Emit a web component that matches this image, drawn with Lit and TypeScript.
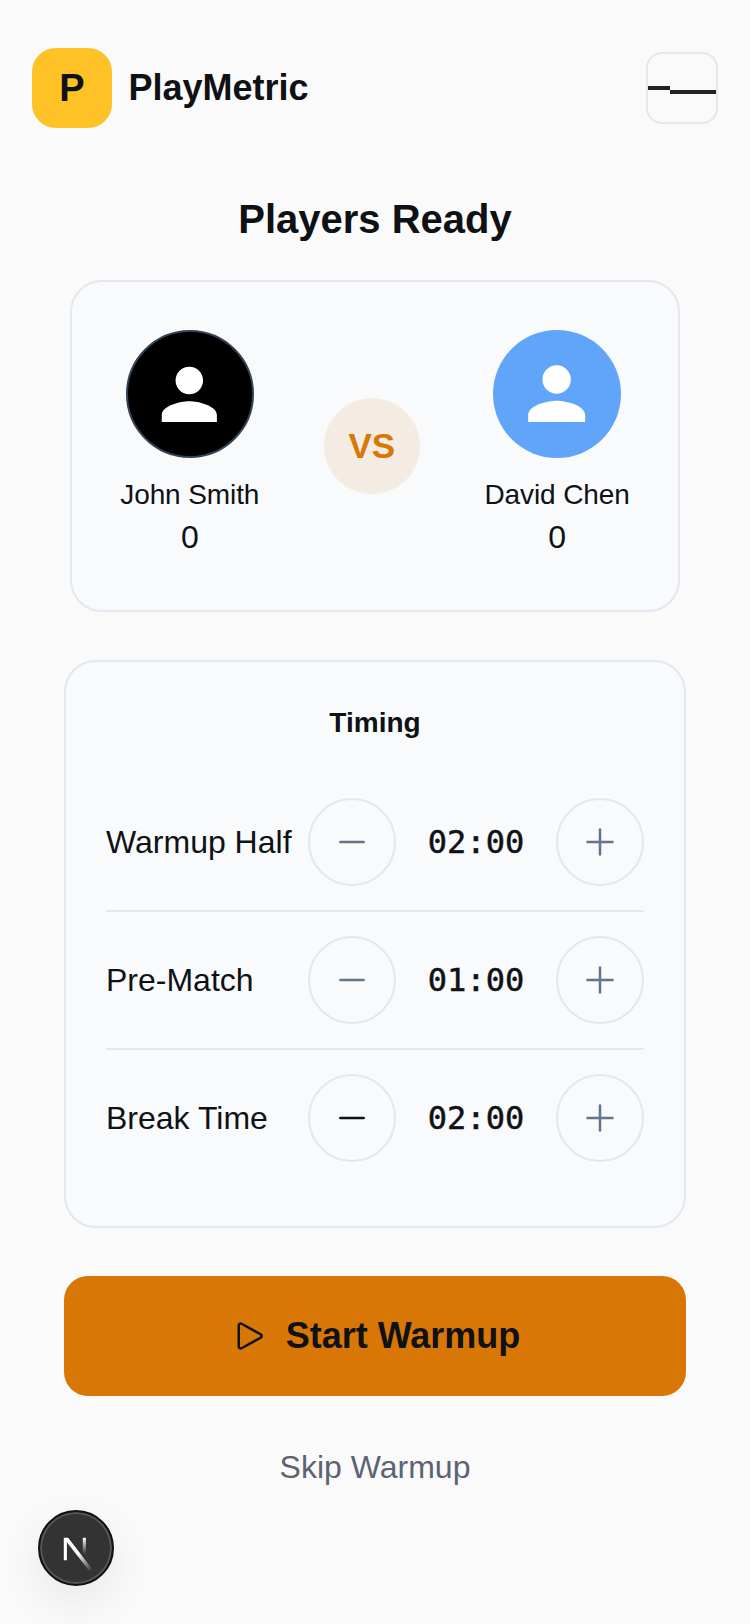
import { LitElement, html, css, svg } from 'lit';
import { customElement } from 'lit/decorators.js';

const personPath = 'M12 12c2.21 0 4-1.79 4-4s-1.79-4-4-4-4 1.79-4 4 1.79 4 4 4zm0 2c-2.67 0-8 1.34-8 4v2h16v-2c0-2.66-5.33-4-8-4z';

const timings = [
  { label: 'Warmup Half', time: '02:00', dark: false },
  { label: 'Pre-Match', time: '01:00', dark: false },
  { label: 'Break Time', time: '02:00', dark: true },
];

@customElement('app-root')
export class AppRoot extends LitElement {
  static styles = css`
    :host {
      display: block;
      position: relative;
      min-height: 1624px;
      overflow: hidden;
      background: #fafafa;
      color: #0f1114;
      font-family: 'Liberation Sans', Arial, sans-serif;
    }

    .header {
      display: flex;
      align-items: center;
      justify-content: space-between;
      padding: 48px 32px 0;
    }

    .brand {
      display: flex;
      align-items: center;
      gap: 16px;
    }

    .logo {
      display: flex;
      align-items: center;
      justify-content: center;
      width: 80px;
      height: 80px;
      border-radius: 24px;
      background: #fec126;
      font-size: 38px;
      font-weight: 700;
    }

    .brand-name {
      padding-left: 0.5px;
      font-size: 36px;
      font-weight: 700;
    }

    .menu {
      display: flex;
      align-items: center;
      box-sizing: border-box;
      width: 72px;
      height: 72px;
      padding: 0;
      border: 2px solid #e2e8f0;
      border-radius: 16px;
      background: transparent;
    }

    .menu span {
      display: block;
      height: 4px;
      background: #222;
    }

    .menu .bar-a {
      width: 22px;
    }

    .menu .bar-b {
      width: 46px;
      margin-top: 8px;
    }

    main {
      padding: 0 64px;
    }

    h1 {
      margin: 61px 0 31px;
      font-size: 40px;
      line-height: 60px;
      font-weight: 700;
      text-align: center;
    }

    .card {
      box-sizing: border-box;
      border: 2px solid #e2e8f0;
      border-radius: 32px;
      background: #f8fafc;
    }

    .match {
      display: flex;
      align-items: center;
      justify-content: space-around;
      margin: 0 6px 48px;
      padding: 48px 16px;
    }

    .player {
      display: flex;
      flex-direction: column;
      align-items: center;
    }

    .avatar {
      display: flex;
      align-items: center;
      justify-content: center;
      box-sizing: border-box;
      width: 128px;
      height: 128px;
      border-radius: 50%;
      color: #fff;
    }

    .avatar svg {
      width: 66.67%;
      height: 66.67%;
      fill: currentColor;
    }

    .avatar.black {
      border: 2px solid #334155;
      background: #000;
    }

    .avatar.blue {
      background: #60a5fa;
    }

    .name {
      margin-top: 16px;
      font-size: 28px;
      line-height: 42px;
      letter-spacing: -0.1px;
    }

    .score {
      padding-bottom: 4px;
      font-size: 32px;
      line-height: 42px;
    }

    .vs {
      display: flex;
      align-items: center;
      justify-content: center;
      width: 96px;
      height: 96px;
      border-radius: 50%;
      background: #f4ebe2;
      color: #d97706;
      font-size: 35px;
      font-weight: 700;
    }

    .timing {
      padding: 40px;
    }

    .timing h2 {
      margin: 0 0 31px;
      padding-top: 1px;
      font-size: 28px;
      line-height: 40px;
      font-weight: 700;
      text-align: center;
    }

    .row {
      display: flex;
      align-items: center;
      justify-content: space-between;
      padding: 24px 0;
      border-bottom: 2px solid #e2e8f0;
    }

    .row:last-child {
      border-bottom: none;
    }

    .row-label {
      font-size: 32px;
    }

    .control {
      display: flex;
      align-items: center;
    }

    .time {
      width: 160px;
      font-family: 'DejaVu Sans Mono', monospace;
      font-size: 32px;
      -webkit-text-stroke: 0.5px currentColor;
      text-align: center;
    }

    .step {
      display: flex;
      align-items: center;
      justify-content: center;
      box-sizing: border-box;
      width: 88px;
      height: 88px;
      padding: 0;
      border: 2px solid #e2e8f0;
      border-radius: 50%;
      background: transparent;
      color: #64748b;
    }

    .step.dark {
      color: #0f1114;
    }

    .step svg,
    .start svg {
      width: 40px;
      height: 40px;
      fill: none;
      stroke: currentColor;
      stroke-width: 1.5;
      stroke-linecap: round;
      stroke-linejoin: round;
    }

    .start {
      display: flex;
      align-items: center;
      justify-content: center;
      gap: 16px;
      box-sizing: border-box;
      width: 100%;
      height: 120px;
      margin-top: 48px;
      border: none;
      border-radius: 24px;
      background: #d97706;
      color: #0f1114;
      font-family: inherit;
      font-size: 36px;
      font-weight: 700;
    }

    .skip {
      margin-top: 47px;
      color: #5a6472;
      font-size: 32px;
      line-height: 48px;
      text-align: center;
    }

    .dev-badge {
      position: absolute;
      left: 38px;
      top: 1510px;
      display: flex;
      align-items: center;
      justify-content: center;
      box-sizing: border-box;
      width: 76px;
      height: 76px;
      border: 2px solid #111;
      border-radius: 50%;
      background: #333;
      box-shadow: inset 0 0 0 2px #555, 0 16px 48px rgba(0, 0, 0, 0.08);
    }

    .dev-badge svg {
      flex: none;
      width: 56px;
      height: 56px;
      margin: 1px 2px 0 0;
    }
  `;

  private person() {
    return html`<svg viewBox="0 0 24 24">${svg`<path d=${personPath}></path>`}</svg>`;
  }

  private renderRow(row: { label: string; time: string; dark: boolean }) {
    return html`
      <div class="row">
        <div class="row-label">${row.label}</div>
        <div class="control">
          <button class="step ${row.dark ? 'dark' : ''}">
            <svg viewBox="0 0 24 24"><path d="M5 12h14"></path></svg>
          </button>
          <div class="time">${row.time}</div>
          <button class="step">
            <svg viewBox="0 0 24 24"><path d="M12 4.5v15m7.5-7.5h-15"></path></svg>
          </button>
        </div>
      </div>
    `;
  }

  render() {
    return html`
      <header class="header">
        <div class="brand">
          <div class="logo">P</div>
          <div class="brand-name">PlayMetric</div>
        </div>
        <button class="menu"><span class="bar-a"></span><span class="bar-b"></span></button>
      </header>

      <main>
        <h1>Players Ready</h1>

        <section class="card match">
          <div class="player">
            <div class="avatar black">${this.person()}</div>
            <div class="name">John Smith</div>
            <div class="score">0</div>
          </div>
          <div class="vs">VS</div>
          <div class="player">
            <div class="avatar blue">${this.person()}</div>
            <div class="name">David Chen</div>
            <div class="score">0</div>
          </div>
        </section>

        <section class="card timing">
          <h2>Timing</h2>
          ${timings.map((row) => this.renderRow(row))}
        </section>

        <button class="start">
          <svg viewBox="0 0 24 24">
            <path d="M5.25 5.653c0-.856.917-1.398 1.667-.986l11.54 6.347a1.125 1.125 0 0 1 0 1.972l-11.54 6.347a1.125 1.125 0 0 1-1.667-.986V5.653Z"></path>
          </svg>
          Start Warmup
        </button>

        <div class="skip">Skip Warmup</div>
      </main>

      <div class="dev-badge">
        <svg viewBox="0 0 180 180" fill="none">
          <defs>
            <linearGradient id="n-a" gradientUnits="userSpaceOnUse" x1="100" y1="105" x2="144" y2="160">
              <stop stop-color="#fff"></stop>
              <stop offset="1" stop-color="#fff" stop-opacity="0"></stop>
            </linearGradient>
            <linearGradient id="n-b" gradientUnits="userSpaceOnUse" x1="121" y1="54" x2="120.8" y2="106.9">
              <stop stop-color="#fff"></stop>
              <stop offset="1" stop-color="#fff" stop-opacity="0"></stop>
            </linearGradient>
          </defs>
          <path fill="url(#n-a)" d="M147 157L68 54H54V126H64V68.5L139 165C142 162.500 144.500 160 147 157Z"></path>
          <rect fill="url(#n-b)" x="115" y="54" width="10" height="72"></rect>
        </svg>
      </div>
    `;
  }
}
